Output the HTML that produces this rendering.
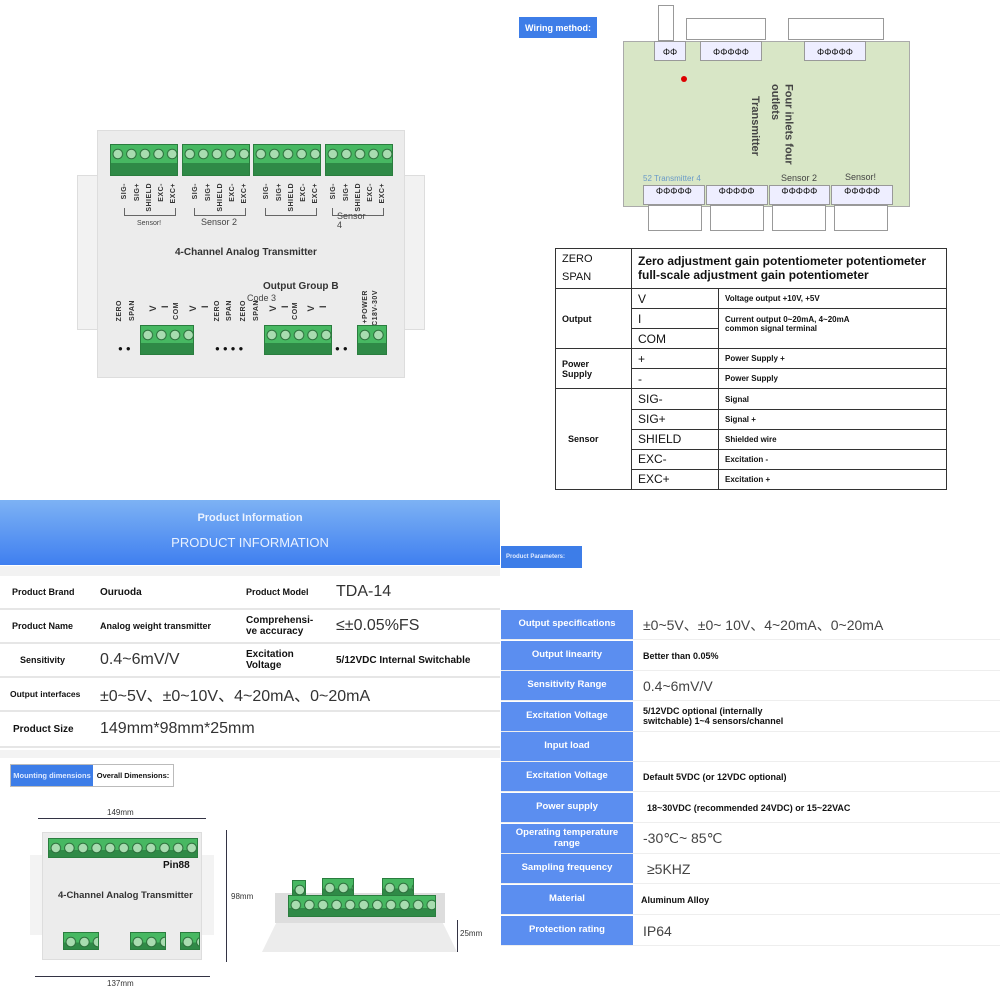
<!DOCTYPE html>
<html><head><meta charset="utf-8"><style>
*{margin:0;padding:0;box-sizing:border-box}
body{width:1000px;height:1000px;position:relative;background:#fff;font-family:"Liberation Sans",sans-serif;overflow:hidden;color:#111}
.a{position:absolute}
.term{background:radial-gradient(circle at 50% 9px,#a8dcb0 0 4px,#2b6d3a 4.5px 5px,transparent 5.5px) 0 0/13.6px 100% repeat-x,linear-gradient(#47b862 0 60%,#2f8a47 60%);border:1px solid #2a7d3e;position:absolute}
.vl{position:absolute;font-size:7px;font-weight:bold;writing-mode:vertical-rl;transform:rotate(180deg);color:#333;letter-spacing:.5px}
.wt td{border:1px solid #333;font-size:10px;padding:0 6px}
.pr{position:absolute;left:501px;width:499px;height:30px;display:flex;border-bottom:1px solid #eee}
.pr .l{width:132px;background:#5b8ef0;color:#fff;font-size:9.5px;font-weight:bold;display:flex;align-items:center;justify-content:center;text-align:center;line-height:1.1}
.pr .v{flex:1;display:flex;align-items:center;padding-left:10px;font-size:9px;font-weight:bold}
.pr .v.big{font-size:14px;font-weight:normal;color:#444}
.lr{position:absolute;left:0;width:500px;border-bottom:2px solid #e6e6e6;display:flex;align-items:center}
</style></head><body>

<!-- top-left photo -->
<div class="a" style="left:77px;top:175px;width:22px;height:155px;background:#f2f2f2;border:1px solid #ddd"></div>
<div class="a" style="left:403px;top:175px;width:22px;height:155px;background:#f2f2f2;border:1px solid #ddd"></div>
<div class="a" style="left:97px;top:130px;width:308px;height:248px;background:#ececec;border:1px solid #ddd"></div>
<div class="term" style="left:110px;top:144px;width:68px;height:32px"></div>
<div class="term" style="left:182px;top:144px;width:68px;height:32px"></div>
<div class="term" style="left:253px;top:144px;width:68px;height:32px"></div>
<div class="term" style="left:325px;top:144px;width:68px;height:32px"></div>
<div class="vl" style="left:121px;top:183px">SIG-</div><div class="vl" style="left:134px;top:183px">SIG+</div><div class="vl" style="left:146px;top:183px">SHIELD</div><div class="vl" style="left:158px;top:183px">EXC-</div><div class="vl" style="left:170px;top:183px">EXC+</div>
<div class="vl" style="left:192px;top:183px">SIG-</div><div class="vl" style="left:205px;top:183px">SIG+</div><div class="vl" style="left:217px;top:183px">SHIELD</div><div class="vl" style="left:229px;top:183px">EXC-</div><div class="vl" style="left:241px;top:183px">EXC+</div>
<div class="vl" style="left:263px;top:183px">SIG-</div><div class="vl" style="left:276px;top:183px">SIG+</div><div class="vl" style="left:288px;top:183px">SHIELD</div><div class="vl" style="left:300px;top:183px">EXC-</div><div class="vl" style="left:312px;top:183px">EXC+</div>
<div class="vl" style="left:330px;top:183px">SIG-</div><div class="vl" style="left:343px;top:183px">SIG+</div><div class="vl" style="left:355px;top:183px">SHIELD</div><div class="vl" style="left:367px;top:183px">EXC-</div><div class="vl" style="left:379px;top:183px">EXC+</div>
<div class="a" style="left:124px;top:208px;width:52px;height:8px;border:1px solid #666;border-top:none"></div>
<div class="a" style="left:194px;top:208px;width:52px;height:8px;border:1px solid #666;border-top:none"></div>
<div class="a" style="left:265px;top:208px;width:52px;height:8px;border:1px solid #666;border-top:none"></div>
<div class="a" style="left:332px;top:208px;width:52px;height:8px;border:1px solid #666;border-top:none"></div>
<div class="a" style="left:137px;top:220px;font-size:7px;color:#444">Sensor!</div>
<div class="a" style="left:201px;top:217px;font-size:9px;color:#444">Sensor 2</div>
<div class="a" style="left:337px;top:212px;font-size:9px;color:#444;line-height:1">Sensor<br>4</div>
<div class="a" style="left:175px;top:247px;font-size:10px;font-weight:bold;color:#333">4-Channel Analog Transmitter</div>
<div class="a" style="left:263px;top:281px;font-size:10px;font-weight:bold;color:#333">Output Group B</div>
<div class="a" style="left:247px;top:293px;font-size:9px;color:#444">Code 3</div>
<div class="vl" style="left:116px;top:300px">ZERO</div><div class="vl" style="left:129px;top:300px">SPAN</div><div class="vl" style="left:148px;top:305px;font-size:9px">V</div><div class="vl" style="left:160px;top:305px;font-size:9px">I</div><div class="vl" style="left:173px;top:302px">COM</div><div class="vl" style="left:188px;top:305px;font-size:9px">V</div><div class="vl" style="left:200px;top:305px;font-size:9px">I</div><div class="vl" style="left:214px;top:300px">ZERO</div><div class="vl" style="left:226px;top:300px">SPAN</div>
<div class="vl" style="left:240px;top:300px">ZERO</div><div class="vl" style="left:253px;top:300px">SPAN</div><div class="vl" style="left:268px;top:305px;font-size:9px">V</div><div class="vl" style="left:280px;top:305px;font-size:9px">I</div><div class="vl" style="left:292px;top:302px">COM</div><div class="vl" style="left:306px;top:305px;font-size:9px">V</div><div class="vl" style="left:318px;top:305px;font-size:9px">I</div><div class="vl" style="left:362px;top:290px">+POWER</div><div class="vl" style="left:372px;top:290px">~DC18V-30V</div>
<div class="term" style="left:140px;top:325px;width:54px;height:30px"></div>
<div class="term" style="left:264px;top:325px;width:68px;height:30px"></div>
<div class="term" style="left:357px;top:325px;width:30px;height:30px"></div>
<div class="a" style="left:118px;top:344px;font-size:8px;letter-spacing:3px">●●</div>
<div class="a" style="left:215px;top:344px;font-size:8px;letter-spacing:3px">●●●●</div>
<div class="a" style="left:335px;top:344px;font-size:8px;letter-spacing:3px">●●</div>

<!-- wiring method -->
<div class="a" style="left:519px;top:17px;width:78px;height:21px;background:#3d7de8;color:#fff;font-size:9px;font-weight:bold;display:flex;align-items:center;justify-content:center">Wiring method:</div>
<div class="a" style="left:623px;top:41px;width:287px;height:166px;background:#d8e6c6;border:1px solid #aaa"></div>
<div class="a" style="left:658px;top:5px;width:16px;height:36px;background:#fff;border:1px solid #999"></div>
<div class="a" style="left:686px;top:18px;width:80px;height:22px;background:#fff;border:1px solid #999"></div>
<div class="a" style="left:788px;top:18px;width:96px;height:22px;background:#fff;border:1px solid #999"></div>
<div class="a" style="left:654px;top:41px;width:32px;height:20px;background:#eef;border:1px solid #999;font-size:9px;text-align:center;line-height:20px">ΦΦ</div>
<div class="a" style="left:700px;top:41px;width:62px;height:20px;background:#eef;border:1px solid #999;font-size:9px;text-align:center;line-height:20px">ΦΦΦΦΦ</div>
<div class="a" style="left:804px;top:41px;width:62px;height:20px;background:#eef;border:1px solid #999;font-size:9px;text-align:center;line-height:20px">ΦΦΦΦΦ</div>
<div class="a" style="left:681px;top:76px;width:6px;height:6px;border-radius:50%;background:#d00"></div>
<div class="a" style="left:768px;top:84px;font-size:11px;font-weight:bold;color:#444;writing-mode:vertical-rl;line-height:1.2">Four inlets four<br>outlets</div>
<div class="a" style="left:749px;top:96px;font-size:11px;font-weight:bold;color:#444;writing-mode:vertical-rl">Transmitter</div>
<div class="a" style="left:643px;top:174px;font-size:8px;color:#6a9ac8">52 Transmitter 4</div>
<div class="a" style="left:781px;top:173px;font-size:9px;color:#444">Sensor 2</div>
<div class="a" style="left:845px;top:172px;font-size:9px;color:#444">Sensor!</div>
<div class="a" style="left:643px;top:185px;width:250px;height:20px;display:flex;gap:1px">
<div style="flex:1;background:#eef;border:1px solid #999;font-size:9px;text-align:center">ΦΦΦΦΦ</div><div style="flex:1;background:#eef;border:1px solid #999;font-size:9px;text-align:center">ΦΦΦΦΦ</div><div style="flex:1;background:#eef;border:1px solid #999;font-size:9px;text-align:center">ΦΦΦΦΦ</div><div style="flex:1;background:#eef;border:1px solid #999;font-size:9px;text-align:center">ΦΦΦΦΦ</div></div>
<div class="a" style="left:648px;top:205px;width:240px;height:26px;display:flex;gap:8px">
<div style="flex:1;background:#fff;border:1px solid #999"></div><div style="flex:1;background:#fff;border:1px solid #999"></div><div style="flex:1;background:#fff;border:1px solid #999"></div><div style="flex:1;background:#fff;border:1px solid #999"></div></div>

<!-- wiring table -->
<table class="a wt" style="left:555px;top:248px;width:392px;height:242px;border-collapse:collapse">
<tr style="height:40px"><td style="width:76px;font-size:11px;line-height:1.6">ZERO<br>SPAN</td><td colspan="2" style="font-size:12px;font-weight:bold;line-height:1.1">Zero adjustment gain potentiometer potentiometer<br>full-scale adjustment gain potentiometer</td></tr>
<tr><td rowspan="3" style="font-weight:bold;font-size:9px">Output</td><td style="width:87px;font-size:12px">V</td><td style="font-weight:bold;font-size:8px">Voltage output +10V, +5V</td></tr>
<tr><td style="font-size:12px">I</td><td rowspan="2" style="font-weight:bold;font-size:8px;vertical-align:top;padding-top:6px">Current output 0~20mA, 4~20mA<br>common signal terminal</td></tr>
<tr><td style="font-size:12px">COM</td></tr>
<tr><td rowspan="2" style="font-weight:bold;font-size:9px">Power<br>Supply</td><td style="font-size:12px">+</td><td style="font-weight:bold;font-size:8px">Power Supply +</td></tr>
<tr><td style="font-size:12px">-</td><td style="font-weight:bold;font-size:8px">Power Supply</td></tr>
<tr><td rowspan="5" style="font-weight:bold;font-size:9px;padding-left:12px">Sensor</td><td style="font-size:12px">SIG-</td><td style="font-weight:bold;font-size:8px">Signal</td></tr>
<tr><td style="font-size:12px">SIG+</td><td style="font-weight:bold;font-size:8px">Signal +</td></tr>
<tr><td style="font-size:12px">SHIELD</td><td style="font-weight:bold;font-size:8px">Shielded wire</td></tr>
<tr><td style="font-size:12px">EXC-</td><td style="font-weight:bold;font-size:8px">Excitation -</td></tr>
<tr><td style="font-size:12px">EXC+</td><td style="font-weight:bold;font-size:8px">Excitation +</td></tr>
</table>

<!-- product info header -->
<div class="a" style="left:0;top:500px;width:500px;height:65px;background:linear-gradient(#7db2f4,#3f7ff0);color:#eaf2ff;text-align:center">
<div style="font-size:11px;font-weight:bold;margin-top:12px">Product Information</div>
<div style="font-size:13px;margin-top:11px">PRODUCT INFORMATION</div></div>
<div class="a" style="left:0;top:566px;width:500px;height:10px;background:#f2f2f2"></div>
<div class="lr" style="top:576px;height:34px"><div style="width:100px;padding-left:12px;font-size:9px;font-weight:bold">Product Brand</div><div style="width:146px;font-size:10px;font-weight:bold">Ouruoda</div><div style="width:90px;font-size:9px;font-weight:bold">Product Model</div><div style="font-size:16px;color:#333">TDA-14</div></div>
<div class="lr" style="top:610px;height:34px"><div style="width:100px;padding-left:12px;font-size:9px;font-weight:bold">Product Name</div><div style="width:146px;font-size:9px;font-weight:bold">Analog weight transmitter</div><div style="width:90px;font-size:10px;font-weight:bold;line-height:1.1">Comprehensi-<br>ve accuracy</div><div style="font-size:16px;color:#333">≤±0.05%FS</div></div>
<div class="lr" style="top:644px;height:34px"><div style="width:100px;padding-left:20px;font-size:9px;font-weight:bold">Sensitivity</div><div style="width:146px;font-size:16px;color:#333">0.4~6mV/V</div><div style="width:90px;font-size:10px;font-weight:bold;line-height:1.1">Excitation<br>Voltage</div><div style="font-size:10px;font-weight:bold">5/12VDC Internal Switchable</div></div>
<div class="lr" style="top:678px;height:34px"><div style="width:100px;padding-left:10px;font-size:8.5px;font-weight:bold">Output interfaces</div><div style="font-size:16px;color:#333">±0~5V、±0~10V、4~20mA、0~20mA</div></div>
<div class="lr" style="top:712px;height:36px"><div style="width:100px;padding-left:13px;font-size:10px;font-weight:bold">Product Size</div><div style="font-size:16px;color:#333">149mm*98mm*25mm</div></div>
<div class="a" style="left:0;top:750px;width:500px;height:8px;background:#f3f3f3"></div>

<!-- mounting -->
<div class="a" style="left:10px;top:764px;width:164px;height:23px;border:1px solid #bbb;display:flex;font-size:7.5px;font-weight:bold">
<div style="width:82px;background:#3d7de8;color:#dfeaff;display:flex;align-items:center;justify-content:center">Mounting dimensions</div><div style="flex:1;display:flex;align-items:center;justify-content:center">Overall Dimensions:</div></div>
<div class="a" style="left:38px;top:818px;width:168px;height:1px;background:#334"></div>
<div class="a" style="left:107px;top:808px;font-size:8px;color:#333">149mm</div>
<div class="a" style="left:30px;top:855px;width:184px;height:80px;background:#f3f3f3"></div>
<div class="a" style="left:42px;top:832px;width:160px;height:128px;background:#ececec;border:1px solid #ddd"></div>
<div class="term" style="left:48px;top:838px;width:150px;height:20px"></div>
<div class="a" style="left:163px;top:860px;font-size:10px;font-weight:bold">Pin88</div>
<div class="a" style="left:58px;top:890px;font-size:9.5px;font-weight:bold;color:#333">4-Channel Analog Transmitter</div>
<div class="term" style="left:63px;top:932px;width:36px;height:18px"></div>
<div class="term" style="left:130px;top:932px;width:36px;height:18px"></div>
<div class="term" style="left:180px;top:932px;width:20px;height:18px"></div>
<div class="a" style="left:226px;top:830px;width:1px;height:132px;background:#334"></div>
<div class="a" style="left:231px;top:892px;font-size:8px;color:#333">98mm</div>
<div class="a" style="left:35px;top:976px;width:175px;height:1px;background:#334"></div>
<div class="a" style="left:107px;top:979px;font-size:8px;color:#333">137mm</div>
<div class="a" style="left:262px;top:920px;width:195px;height:32px;background:#ececec;clip-path:polygon(8% 0,92% 0,100% 100%,0 100%)"></div>
<div class="a" style="left:275px;top:893px;width:170px;height:30px;background:#ddd"></div>
<div class="term" style="left:288px;top:895px;width:148px;height:22px"></div>
<div class="term" style="left:292px;top:880px;width:14px;height:16px"></div>
<div class="term" style="left:322px;top:878px;width:32px;height:18px"></div>
<div class="term" style="left:382px;top:878px;width:32px;height:18px"></div>
<div class="a" style="left:457px;top:920px;width:1px;height:32px;background:#334"></div>
<div class="a" style="left:460px;top:929px;font-size:8px;color:#333">25mm</div>

<!-- product parameters -->
<div class="a" style="left:501px;top:546px;width:81px;height:22px;background:#3d7de8;color:#dfeaff;font-size:6px;font-weight:bold;display:flex;align-items:center;padding-left:5px">Product Parameters:</div>
<div class="pr" style="top:610px"><div class="l">Output specifications</div><div class="v big">±0~5V、±0~ 10V、4~20mA、0~20mA</div></div>
<div class="pr" style="top:641px"><div class="l">Output linearity</div><div class="v">Better than 0.05%</div></div>
<div class="pr" style="top:671px"><div class="l">Sensitivity Range</div><div class="v big">0.4~6mV/V</div></div>
<div class="pr" style="top:702px"><div class="l">Excitation Voltage</div><div class="v" style="line-height:1.1">5/12VDC optional (internally<br>switchable) 1~4 sensors/channel</div></div>
<div class="pr" style="top:732px"><div class="l">Input load</div><div class="v"></div></div>
<div class="pr" style="top:762px"><div class="l">Excitation Voltage</div><div class="v">Default 5VDC (or 12VDC optional)</div></div>
<div class="pr" style="top:793px"><div class="l">Power supply</div><div class="v" style="padding-left:14px">18~30VDC (recommended 24VDC) or 15~22VAC</div></div>
<div class="pr" style="top:824px"><div class="l">Operating temperature<br>range</div><div class="v big">-30℃~ 85℃</div></div>
<div class="pr" style="top:854px"><div class="l">Sampling frequency</div><div class="v big" style="padding-left:14px">≥5KHZ</div></div>
<div class="pr" style="top:885px"><div class="l">Material</div><div class="v" style="padding-left:8px">Aluminum Alloy</div></div>
<div class="pr" style="top:916px"><div class="l">Protection rating</div><div class="v big">IP64</div></div>
</body></html>
